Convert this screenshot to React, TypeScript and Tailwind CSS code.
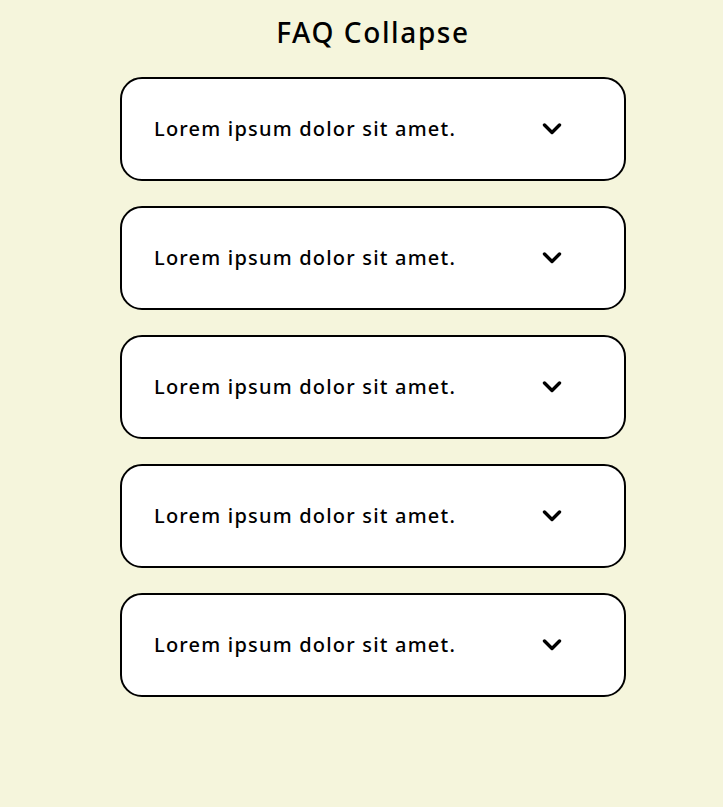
const items = [1, 2, 3, 4, 5];

function Chevron() {
  return (
    <svg width="20" height="12" viewBox="0 0 20 12" fill="none">
      <polyline
        points="2.5,2 10,9.5 17.5,2"
        stroke="#000"
        strokeWidth="3.4"
        strokeLinecap="round"
        strokeLinejoin="round"
      />
    </svg>
  );
}

export default function App() {
  return (
    <div className="min-h-screen w-full bg-[#f5f5dc] font-['Noto_Sans',sans-serif] text-black">
      <div className="flex flex-col items-center pl-[23px] pt-[11px]">
        <h1 className="text-[28px] leading-[42px] font-medium tracking-[1.6px]">FAQ Collapse</h1>
        <div className="mt-[24px] flex flex-col gap-[25px]">
          {items.map((i) => (
            <div
              key={i}
              className="flex h-[104px] w-[506px] items-center justify-between rounded-[22px] border-2 border-black bg-white pl-[32px] pr-[62px]"
            >
              <span className="text-[20px] font-medium tracking-[1.2px]">Lorem ipsum dolor sit amet.</span>
              <Chevron />
            </div>
          ))}
        </div>
      </div>
    </div>
  );
}
